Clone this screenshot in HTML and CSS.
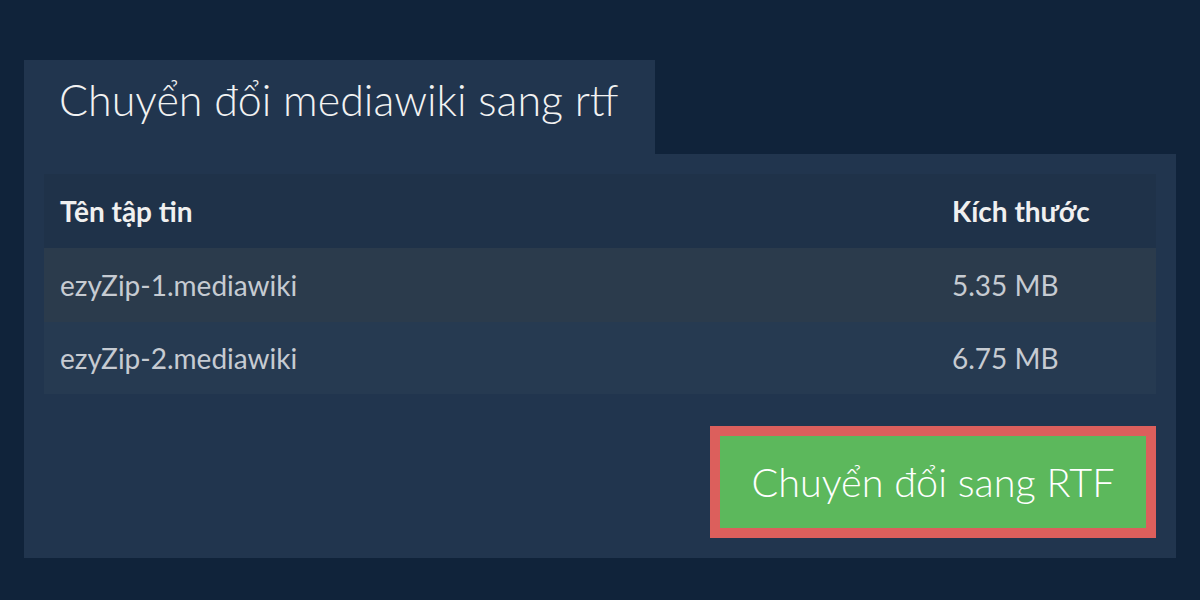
FILE: index.html
```html
<!DOCTYPE html>
<html lang="vi">
<head>
<meta charset="utf-8">
<title>Chuyển đổi mediawiki sang rtf</title>
<link rel="stylesheet" href="styles.css">
</head>
<body>
<main class="page">
  <div class="tab"><h1 class="title">Chuyển đổi mediawiki sang rtf</h1></div>
  <section class="panel">
    <div class="table">
      <div class="row head"><div class="cell">Tên tập tin</div><div class="cell">Kích thước</div></div>
      <div class="row odd"><div class="cell">ezyZip-1.mediawiki</div><div class="cell">5.35 MB</div></div>
      <div class="row even"><div class="cell">ezyZip-2.mediawiki</div><div class="cell">6.75 MB</div></div>
    </div>
    <div class="actions"><button class="convert">Chuyển đổi sang RTF</button></div>
  </section>
</main>
</body>
</html>
```
FILE: styles.css
```css
* { box-sizing: border-box; }
html, body { margin: 0; padding: 0; }
body {
  background: #10233a;
  font-family: Lato, "Noto Sans", sans-serif;
  width: 1200px;
  height: 600px;
  overflow: hidden;
}
.page {
  padding: 60px 24px 0 24px;
}
.tab {
  width: 631px;
  height: 94px;
  background: #21354e;
  padding-left: 35px;
  display: flex;
  align-items: center;
}
.title {
  margin: 0;
  font-size: 43px;
  font-weight: 300;
  color: #f2f2f2;
  line-height: 1;
  padding-bottom: 15px;
}
.panel {
  background: #21354e;
  padding: 20px;
}
.table {
  display: grid;
  grid-template-rows: 74px 74px 72px;
}
.row {
  display: grid;
  grid-template-columns: 1fr 220px;
  align-items: center;
}
.cell { padding-left: 16px; }
.head { background: #1f3249; }
.head .cell { font-weight: 700; font-size: 28px; color: #f0f0f0; }
.odd { background: #2b3b4c; }
.even { background: #263a51; }
.odd .cell, .even .cell { font-size: 28px; color: #c6cbd2; }
.actions {
  display: flex;
  justify-content: flex-end;
  margin-top: 32px;
}
.convert {
  width: 446px;
  height: 112px;
  border: 10px solid #dc5f5c;
  background: #5cb85c;
  color: #ffffff;
  font-family: Lato, "Noto Sans", sans-serif;
  font-size: 39.6px;
  font-weight: 300;
  padding: 0 0 2px 0;
}
```
